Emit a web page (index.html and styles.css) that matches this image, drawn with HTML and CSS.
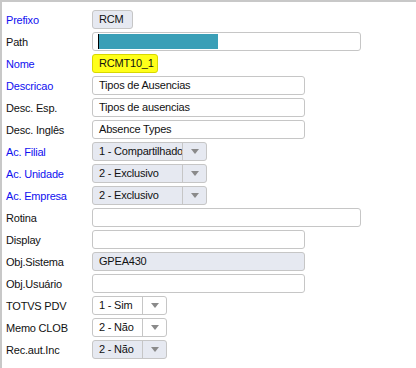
FILE: index.html
```html
<!DOCTYPE html>
<html>
<head>
<meta charset="utf-8">
<link rel="stylesheet" href="styles.css">
</head>
<body>
<div class="panel">
  <div class="row"><span class="label req">Prefixo</span><span class="field ro w-pre">RCM</span></div>
  <div class="row"><span class="label">Path</span><span class="field w-long"><span class="cursor"></span><span class="sel"></span></span></div>
  <div class="row"><span class="label req">Nome</span><span class="field hl w-nome">RCMT10_1</span></div>
  <div class="row"><span class="label req">Descricao</span><span class="field w-mid">Tipos de Ausencias</span></div>
  <div class="row"><span class="label">Desc. Esp.</span><span class="field w-mid">Tipos de ausencias</span></div>
  <div class="row"><span class="label">Desc. Inglês</span><span class="field w-mid">Absence Types</span></div>
  <div class="row"><span class="label req">Ac. Filial</span><span class="combo ro w-cb"><span class="val">1 - Compartilhado</span><span class="btn"><span class="tri"></span></span></span></div>
  <div class="row"><span class="label req">Ac. Unidade</span><span class="combo ro w-cb"><span class="val">2 - Exclusivo</span><span class="btn"><span class="tri"></span></span></span></div>
  <div class="row"><span class="label req">Ac. Empresa</span><span class="combo ro w-cb"><span class="val">2 - Exclusivo</span><span class="btn"><span class="tri"></span></span></span></div>
  <div class="row"><span class="label">Rotina</span><span class="field w-long"></span></div>
  <div class="row"><span class="label">Display</span><span class="field w-mid"></span></div>
  <div class="row"><span class="label">Obj.Sistema</span><span class="field ro w-mid">GPEA430</span></div>
  <div class="row"><span class="label">Obj.Usuário</span><span class="field w-mid"></span></div>
  <div class="row"><span class="label">TOTVS PDV</span><span class="combo w-cs"><span class="val">1 - Sim</span><span class="btn"><span class="tri"></span></span></span></div>
  <div class="row"><span class="label">Memo CLOB</span><span class="combo w-cs"><span class="val">2 - Não</span><span class="btn"><span class="tri"></span></span></span></div>
  <div class="row"><span class="label">Rec.aut.Inc</span><span class="combo ro w-cs"><span class="val">2 - Não</span><span class="btn"><span class="tri"></span></span></span></div>
</div>
</body>
</html>
```
FILE: styles.css
```css
html, body {
  margin: 0;
  padding: 0;
  background: #fff;
}
body {
  font-family: "Liberation Sans", Arial, sans-serif;
  font-size: 11px;
  letter-spacing: -0.2px;
  color: #111;
}
.panel {
  width: 416px;
  height: 368px;
  box-sizing: border-box;
  border-top: 2px solid #c8c8c8;
  border-left: 2px solid #c8c8c8;
  padding: 8px 0 0 4px;
  display: flex;
  flex-direction: column;
  gap: 3px;
}
.row {
  display: flex;
  align-items: center;
  height: 19px;
}
.label {
  width: 86px;
  flex: none;
  color: #111;
}
.label.req {
  color: #1010f0;
}
.field, .combo {
  box-sizing: border-box;
  height: 19px;
  border: 1px solid #c6c6c6;
  border-radius: 3px;
  background: #fff;
  line-height: 17px;
  color: #111;
}
.field {
  display: flex;
  align-items: center;
  padding-left: 6px;
}
.ro {
  background: #e6e9f1;
}
.hl {
  background: #ffff1a;
  border-color: #d8d800;
}
.w-pre { width: 41px; }
.w-long { width: 269px; }
.w-nome { width: 66px; }
.w-mid { width: 213px; }
.w-cb { width: 115px; }
.w-cs { width: 75px; }
.cursor {
  width: 1px;
  height: 15px;
  background: #000;
  flex: none;
}
.sel {
  width: 119px;
  height: 15px;
  background: #3a9fb7;
  flex: none;
}
.field:has(.cursor) {
  padding-left: 5px;
}
.combo {
  display: flex;
  align-items: stretch;
}
.combo .val {
  flex: 1;
  padding-left: 6px;
  white-space: nowrap;
  overflow: hidden;
}
.combo .btn {
  width: 23px;
  flex: none;
  border-left: 1px solid #c6c6c6;
  display: flex;
  align-items: center;
  justify-content: center;
}
.tri {
  width: 0;
  height: 0;
  border-left: 4px solid transparent;
  border-right: 4px solid transparent;
  border-top: 5px solid #8a8a8a;
}
```
